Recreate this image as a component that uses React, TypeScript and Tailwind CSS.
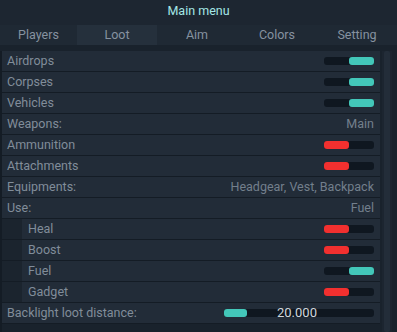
import React from 'react';

type Row =
  | { label: string; kind: 'toggle'; on: boolean; sub?: boolean }
  | { label: string; kind: 'value'; value: string; sub?: boolean };

const rows: Row[] = [
  { label: 'Airdrops', kind: 'toggle', on: true },
  { label: 'Corpses', kind: 'toggle', on: true },
  { label: 'Vehicles', kind: 'toggle', on: true },
  { label: 'Weapons:', kind: 'value', value: 'Main' },
  { label: 'Ammunition', kind: 'toggle', on: false },
  { label: 'Attachments', kind: 'toggle', on: false },
  { label: 'Equipments:', kind: 'value', value: 'Headgear, Vest, Backpack' },
  { label: 'Use:', kind: 'value', value: 'Fuel' },
  { label: 'Heal', kind: 'toggle', on: false, sub: true },
  { label: 'Boost', kind: 'toggle', on: false, sub: true },
  { label: 'Fuel', kind: 'toggle', on: true, sub: true },
  { label: 'Gadget', kind: 'toggle', on: false, sub: true },
];

const tabs = ['Players', 'Loot', 'Aim', 'Colors', 'Setting'];

function Toggle({ on }: { on: boolean }) {
  return (
    <div className="flex h-[8px] w-[50px] rounded-[3px] bg-[#0f1720]">
      {on ? (
        <div className="ml-auto h-full w-[25px] rounded-[3px] bg-[#43c7b9]" />
      ) : (
        <div className="h-full w-[25px] rounded-[3px] bg-[#f2302f]" />
      )}
    </div>
  );
}

export default function App() {
  return (
    <div
      className="flex h-[332px] w-[397px] flex-col overflow-hidden bg-[#19222c] text-[12.5px] text-[#818d9a]"
      style={{ fontFamily: 'Roboto, "Liberation Sans", sans-serif' }}
    >
      {/* Title */}
      <div className="flex h-[25px] items-center justify-center bg-[#1d2631] pb-[2px] text-[#a4e6e6]">
        Main menu
      </div>

      {/* Tabs */}
      <div className="flex h-[20px] bg-[#1f2934] text-[#8692a0]">
        {tabs.map((t, i) => (
          <div
            key={t}
            className={`flex items-center justify-center ${i === 0 ? 'w-[77px]' : 'w-[80px]'} ${
              t === 'Loot' ? 'bg-[#25303c]' : ''
            }`}
          >
            {t}
          </div>
        ))}
      </div>

      <div className="mt-[6px] flex flex-1">
        {/* List */}
        <div className="flex w-[380px] flex-col gap-[1px] bg-[#141c25] pl-[2px]">
          {rows.map((r) => (
            <div key={r.label} className="flex h-[20px]">
              {r.sub && <div className="w-[20px] bg-[#1b242e]" />}
              <div
                className={`flex flex-1 items-center justify-between bg-[#222c38] pr-[6px] ${
                  r.sub ? 'pl-[6px]' : 'pl-[5px]'
                }`}
              >
                <span>{r.label}</span>
                {r.kind === 'toggle' ? <Toggle on={r.on} /> : <span className="text-[#737f8c]">{r.value}</span>}
              </div>
            </div>
          ))}
          <div className="flex h-[20px] items-center bg-[#222c38] pl-[5px] pr-[6px]">
            <span className="flex-1">Backlight loot distance:</span>
            <div className="relative flex h-[8px] w-[150px] rounded-[3px] bg-[#0f1720]">
              <div className="h-full w-[23px] rounded-[3px] bg-[#43c7b9]" />
              <span className="absolute left-[53px] top-1/2 -translate-y-1/2 text-[13px] text-[#d0d6dc]">20.000</span>
            </div>
          </div>
          <div className="flex-1 bg-[#19222c]" />
        </div>

        {/* Scrollbar */}
        <div className="ml-[2px] flex w-[10px] bg-[#1c2530] px-[2px]">
          <div className="w-full rounded-[2px] bg-[#232d39]" />
        </div>
      </div>
    </div>
  );
}
